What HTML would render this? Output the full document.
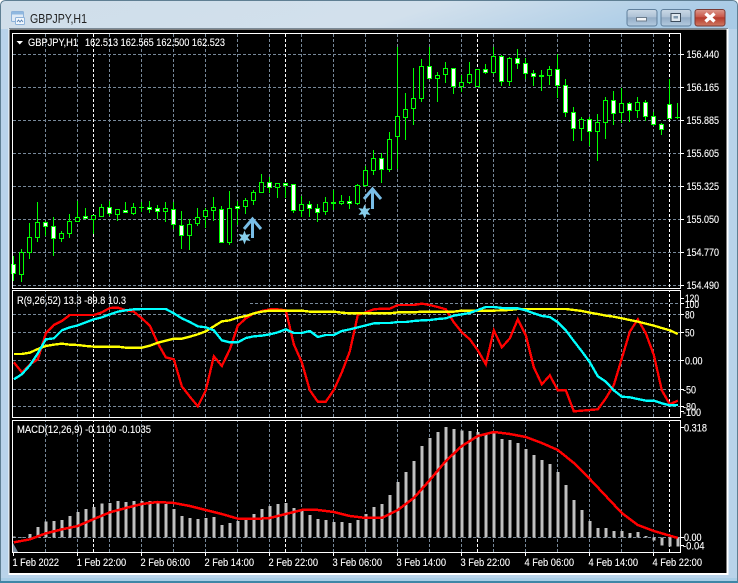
<!DOCTYPE html>
<html><head><meta charset="utf-8"><style>
html,body{margin:0;padding:0;background:#fff;width:738px;height:583px;overflow:hidden}
svg{display:block}
text{font-family:"Liberation Sans",sans-serif;font-size:10.8px;fill:#fff;stroke:#fff;stroke-width:.12px}
</style></head><body>
<svg width="738" height="583" viewBox="0 0 738 583" xmlns="http://www.w3.org/2000/svg">
<defs>
<linearGradient id="t" x1="0" y1="0" x2="1" y2="0.12"><stop offset="0" stop-color="#cfdeea"/><stop offset=".6" stop-color="#d2e0ec"/><stop offset="1" stop-color="#a9cbe6"/></linearGradient>
<linearGradient id="b" x1="0" y1="0" x2="0" y2="1"><stop offset="0" stop-color="#cbd9e6"/><stop offset=".45" stop-color="#aec2d6"/><stop offset=".5" stop-color="#94adc6"/><stop offset="1" stop-color="#b4cbe0"/></linearGradient>
<linearGradient id="r" x1="0" y1="0" x2="0" y2="1"><stop offset="0" stop-color="#dc9a8e"/><stop offset=".45" stop-color="#c9584a"/><stop offset=".5" stop-color="#b53a2c"/><stop offset="1" stop-color="#d07a62"/></linearGradient>
</defs>
<path d="M.5 582.5V6Q.5.5 6 .5H732Q737.5.5 737.5 6V582.5Z" fill="#b9d3ea" stroke="#5f7f93"/>
<path d="M1 29V6Q1 1 6 1H732Q737 1 737 6V29Z" fill="url(#t)"/>
<rect x="1" y="578" width="736" height="3" fill="#a9cde6"/>
<rect x="0" y="581" width="738" height="2" fill="#3f86a6"/>
<rect x="8.5" y="28.5" width="720" height="546.5" fill="#fff"/>
<rect x="9.5" y="29.5" width="717" height="543.5" fill="#000"/>
<rect x="9" y="28" width="719" height="1" fill="#7b8a96"/>
<g>
<rect x="11.5" y="11.5" width="12" height="10" rx="1" fill="#dfeaf6" stroke="#8db2da"/>
<rect x="12" y="12" width="11" height="2.5" fill="#8fb8e0"/>
<rect x="15.5" y="17.5" width="9" height="7" rx="1" fill="#f2f7fc" stroke="#8db2da"/>
<path d="M17 22l1.5-2 1.5 2 1.5-2 1.5 2" fill="none" stroke="#5b86b8" stroke-width=".9"/>
</g>
<text x="30" y="23" textLength="57" lengthAdjust="spacingAndGlyphs" style="font-size:12.5px;fill:#222;stroke:none">GBPJPY,H1</text>
<rect x="627" y="9.5" width="30" height="16.5" rx="2.5" fill="url(#b)" stroke="#5f7f9c"/>
<rect x="661" y="9.5" width="30" height="16.5" rx="2.5" fill="url(#b)" stroke="#5f7f9c"/>
<rect x="695" y="9.5" width="30" height="16.5" rx="2.5" fill="url(#r)" stroke="#7a3a34"/>
<rect x="636.5" y="17.5" width="10" height="3.5" fill="#f4f6f8" stroke="#6c7c8c"/>
<rect x="671" y="13.5" width="9.5" height="8" fill="#dfe8f0" stroke="#3c4c5c"/><rect x="673.5" y="16" width="4.5" height="2.5" fill="#7f97ad"/>
<path d="M705.5 13.5L714.5 21.5M714.5 13.5L705.5 21.5" stroke="#fff" stroke-width="3.4"/>

<!-- horizontal grid -->
<path d="M13 54.5H680M13 87.5H680M13 120.5H680M13 153.5H680M13 186.5H680M13 219.5H680M13 252.5H680M13 285.5H680M250 303.5H680M13 314.5H680M13 332.5H680M13 360.5H680M13 389.5H680M13 406.5H680M13 537.5H680" stroke="#778899" stroke-dasharray="3 2" fill="none"/>
<!-- vertical grid -->
<path d="M45.5 34V552M77.5 34V552M109.5 34V552M141.5 34V552M173.5 34V552M205.5 34V552M237.5 34V552M269.5 34V552M301.5 34V552M333.5 34V552M365.5 34V552M397.5 34V552M429.5 34V552M461.5 34V552M493.5 34V552M525.5 34V552M557.5 34V552M589.5 34V552M621.5 34V552M653.5 34V552" stroke="#778899" stroke-dasharray="3 2" fill="none"/>
<path d="M93.5 34V552M285.5 34V552M477.5 34V552M669.5 34V552" stroke="#fff" stroke-dasharray="3 2" fill="none"/>

<!-- wicks -->
<path fill="none" stroke="#0f0" d="M13.5 256V281M21.5 249V282M29.5 223V259M37.5 202V242M45.5 221V236M53.5 217V256M61.5 231V242M69.5 214V238M77.5 201V222M85.5 208V219M93.5 215V234M101.5 204V217M109.5 201V216M117.5 209V221M125.5 202V213M133.5 203V215M141.5 202V212M149.5 201V213M157.5 205V219M165.5 202V222M173.5 202V229M181.5 211V249M189.5 219V250M197.5 208V226M205.5 208V228M213.5 197V221M221.5 206V243M229.5 191V245M237.5 201V225M245.5 198V214M253.5 190V205M261.5 174V193M269.5 177V193M277.5 183V198M285.5 183V198M293.5 184V213M301.5 196V217M309.5 201V217M317.5 204V222M325.5 197V215M333.5 190V210M341.5 195V205M349.5 196V209M357.5 184V205M365.5 166V187M373.5 150V175M381.5 153V183M389.5 132V172M397.5 47V169M405.5 93V140M413.5 68V125M421.5 59V102M429.5 47V79M437.5 72V102M445.5 62V83M453.5 68V94M461.5 75V92M469.5 62V84M477.5 69V87M485.5 64V74M493.5 47V74M501.5 55V86M509.5 57V86M517.5 49V69M525.5 58V79M533.5 70V86M541.5 70V91M549.5 66V85M557.5 54V98M565.5 79V117M573.5 107V141M581.5 117V141M589.5 117V146M597.5 114V161M605.5 97V139M613.5 91V125M621.5 88V123M629.5 102V122M637.5 97V118M645.5 100V121M653.5 112V126M661.5 123V135M669.5 79V119M677.5 103V119"/>
<!-- filled bodies -->
<path fill="#fff" stroke="#0f0" d="M11.5 264.5h4v9h-4zM43.5 222.5h4v4h-4zM51.5 226.5h4v12h-4zM83.5 216.5h4v2h-4zM107.5 207.5h4v6h-4zM123.5 210.5h4v2h-4zM147.5 207.5h4v2h-4zM155.5 208.5h4v3h-4zM171.5 209.5h4v15h-4zM179.5 225.5h4v10h-4zM219.5 209.5h4v33h-4zM235.5 206.5h4v2h-4zM267.5 182.5h4v5h-4zM283.5 183.5h4v2h-4zM291.5 184.5h4v26h-4zM307.5 204.5h4v4h-4zM315.5 208.5h4v4h-4zM347.5 201.5h4v2h-4zM379.5 158.5h4v11h-4zM427.5 66.5h4v12h-4zM451.5 68.5h4v18h-4zM483.5 69.5h4v3h-4zM499.5 56.5h4v25h-4zM515.5 58.5h4v5h-4zM523.5 63.5h4v10h-4zM531.5 73.5h4v3h-4zM555.5 69.5h4v16h-4zM563.5 85.5h4v27h-4zM571.5 112.5h4v16h-4zM587.5 119.5h4v12h-4zM611.5 100.5h4v13h-4zM627.5 103.5h4v7h-4zM643.5 102.5h4v14h-4zM651.5 116.5h4v8h-4zM659.5 124.5h4v5h-4zM667.5 104.5h4v14h-4z"/>
<!-- hollow bodies -->
<path fill="#000" stroke="#0f0" d="M19.5 252.5h4v22h-4zM27.5 237.5h4v15h-4zM35.5 222.5h4v15h-4zM59.5 233.5h4v5h-4zM67.5 221.5h4v12h-4zM75.5 217.5h4v4h-4zM91.5 215.5h4v4h-4zM99.5 207.5h4v9h-4zM115.5 209.5h4v5h-4zM131.5 207.5h4v6h-4zM163.5 208.5h4v3h-4zM187.5 224.5h4v11h-4zM195.5 217.5h4v6h-4zM203.5 210.5h4v6h-4zM211.5 207.5h4v3h-4zM227.5 208.5h4v34h-4zM243.5 200.5h4v6h-4zM251.5 192.5h4v8h-4zM259.5 182.5h4v10h-4zM275.5 183.5h4v4h-4zM299.5 204.5h4v6h-4zM323.5 202.5h4v9h-4zM339.5 201.5h4v2h-4zM355.5 185.5h4v18h-4zM363.5 170.5h4v15h-4zM371.5 158.5h4v12h-4zM387.5 139.5h4v30h-4zM395.5 116.5h4v20h-4zM403.5 109.5h4v8h-4zM411.5 98.5h4v10h-4zM419.5 66.5h4v32h-4zM435.5 75.5h4v3h-4zM443.5 68.5h4v6h-4zM459.5 82.5h4v4h-4zM467.5 74.5h4v8h-4zM475.5 69.5h4v17h-4zM491.5 56.5h4v16h-4zM507.5 58.5h4v23h-4zM547.5 69.5h4v6h-4zM579.5 119.5h4v9h-4zM595.5 122.5h4v9h-4zM603.5 100.5h4v22h-4zM619.5 103.5h4v9h-4zM635.5 102.5h4v8h-4z"/>
<!-- dojis -->
<path fill="none" stroke="#0f0" d="M139 207.5h5M331 202.5h5M331 203.5h5M539 75.5h5M539 76.5h5M675 117.5h5"/>

<!-- signal arrows and stars -->
<g fill="none" stroke="#79bde6" stroke-width="3">
<path d="M244 229L252.5 219L261 229M252.5 219V238"/>
<path d="M364 199L372.5 189L381 199M372.5 189V209"/>
</g>
<polygon transform="translate(244.5 237.5)" fill="#87ceeb" points="0,-7 1.6,-2.77 6.06,-3.5 3.2,0 6.06,3.5 1.6,2.77 0,7 -1.6,2.77 -6.06,3.5 -3.2,0 -6.06,-3.5 -1.6,-2.77"/>
<polygon transform="translate(364.5 211.5)" fill="#87ceeb" points="0,-7 1.6,-2.77 6.06,-3.5 3.2,0 6.06,3.5 1.6,2.77 0,7 -1.6,2.77 -6.06,3.5 -3.2,0 -6.06,-3.5 -1.6,-2.77"/>

<!-- MACD histogram -->
<g transform="translate(.5 420) scale(.33333)" shape-rendering="crispEdges">
<path fill="none" stroke="#c0c0c0" stroke-width="9" d="M40 352V350M64 352V351M88 352V342M112 352V321M136 352V305M160 352V303M184 352V300M208 352V288M232 352V276M256 352V267M280 352V261M304 352V250M328 352V249M352 352V243M376 352V246M400 352V243M424 352V243M448 352V243M472 352V249M496 352V252M520 352V267M544 352V288M568 352V294M592 352V297M616 352V294M640 352V291M664 352V315M688 352V309M712 352V303M736 352V300M760 352V282M784 352V267M808 352V258M832 352V252M856 352V249M880 352V264M904 352V270M928 352V285M952 352V297M976 352V300M1000 352V306M1024 352V306M1048 352V309M1072 352V300M1096 352V282M1120 352V261M1144 352V252M1168 352V225M1192 352V186M1216 352V156M1240 352V123M1264 352V78M1288 352V54M1312 352V36M1336 352V21M1360 352V27M1384 352V32M1408 352V33M1432 352V36M1456 352V42M1480 352V36M1504 352V57M1528 352V60M1552 352V69M1576 352V87M1600 352V105M1624 352V120M1648 352V132M1672 352V156M1696 352V195M1720 352V240M1744 352V270M1768 352V303M1792 352V324M1816 352V324M1840 352V333M1864 352V333M1888 352V339M1912 352V336M1936 352V348M1960 352V362M1984 352V377M2008 352V380M2032 352V380"/>
<polyline fill="none" stroke="#f00" stroke-width="7.5" points="40,367 88,358 136,340 184,328 232,318 280,297 328,277 376,264 424,252 472,246 520,249 568,258 616,270 664,282 712,296 760,297 808,294 856,282 904,270 952,270 1000,276 1048,288 1096,294 1144,294 1192,270 1240,234 1288,180 1336,123 1384,78 1432,48 1480,36 1528,42 1576,51 1624,69 1672,90 1720,129 1768,177 1816,228 1864,279 1912,315 1960,333 2008,347 2032,354"/>
</g>
<polygon points="13,543 18,552 13,552" fill="#778899"/>

<!-- RSI-type lines -->
<g transform="translate(.5 285) scale(.33333)" shape-rendering="crispEdges" fill="none" stroke-width="7">
<polyline stroke="#f00" points="40,232 64,262 88,238 112,223 136,145 160,120 184,108 208,90 232,90 256,90 280,90 304,82 328,69 352,68 376,76 400,80 424,100 448,122 472,175 496,217 520,223 544,304 568,335 592,364 616,316 640,214 664,243 688,193 712,122 736,100 760,85 784,78 808,73 832,73 856,76 880,178 904,232 928,316 952,350 976,350 1000,315 1024,262 1048,199 1072,90 1096,82 1120,73 1144,71 1168,71 1192,60 1216,60 1240,60 1264,56 1288,60 1312,66 1336,73 1360,112 1384,142 1408,163 1432,196 1456,238 1480,136 1504,187 1528,160 1552,103 1576,151 1600,247 1624,298 1648,271 1672,316 1696,316 1720,379 1744,377 1768,375 1792,373 1816,340 1840,300 1864,220 1888,140 1912,103 1936,145 1960,210 1984,316 2008,358 2032,347"/>
<polyline stroke="#ff0" points="40,207 64,207 88,203 112,192 136,183 160,179 184,176 208,179 232,180 256,183 280,185 304,185 328,185 352,185 376,188 400,188 424,188 448,182 472,173 496,167 520,161 544,161 568,155 592,148 616,139 640,124 664,109 688,106 712,98 736,93 760,85 784,80 808,77 832,77 856,77 880,77 904,77 928,80 952,80 976,80 1000,80 1024,83 1048,85 1072,85 1096,85 1120,85 1144,85 1168,85 1192,82 1216,82 1240,82 1264,80 1288,80 1312,80 1336,80 1360,80 1384,77 1408,77 1432,77 1456,77 1480,77 1504,76 1528,75 1552,72 1576,72 1600,72 1624,72 1648,72 1672,72 1696,72 1720,75 1744,78 1768,83 1792,87 1816,92 1840,95 1864,100 1888,105 1912,110 1936,116 1960,122 1984,129 2008,136 2032,147"/>
<polyline stroke="#0ff" points="40,283 64,268 88,241 112,205 136,163 160,160 184,136 208,127 232,121 256,112 280,103 304,97 328,88 352,80 376,76 400,73 424,72 448,72 472,72 496,72 520,85 544,100 568,111 592,124 616,127 640,136 664,166 688,172 712,172 736,159 760,154 784,152 808,148 832,142 856,133 880,144 904,144 928,138 952,156 976,150 1000,150 1024,138 1048,133 1072,127 1096,121 1120,115 1144,114 1168,114 1192,111 1216,111 1240,108 1264,106 1288,105 1312,102 1336,100 1360,92 1384,88 1408,84 1432,75 1456,66 1480,66 1504,69 1528,70 1552,70 1576,76 1600,85 1624,93 1648,96 1672,112 1696,136 1720,168 1744,199 1768,232 1792,274 1816,290 1840,316 1864,335 1888,337 1912,342 1936,347 1960,347 1984,355 2008,361 2032,360"/>
</g>

<!-- panel gaps and frames -->
<path d="M13 289.5H680M13 418.5H680M13 419.5H680" stroke="#000" fill="none"/>
<g fill="none" stroke="#fff">
<rect x="12.5" y="33.5" width="668" height="255"/>
<rect x="12.5" y="290.5" width="668" height="127"/>
<rect x="12.5" y="420.5" width="668" height="132"/>
<path d="M681 54.5h3M681 87.5h3M681 120.5h3M681 153.5h3M681 186.5h3M681 219.5h3M681 252.5h3M681 285.5h3M681 298.5h3M681 303.5h3M681 314.5h3M681 332.5h3M681 360.5h3M681 389.5h3M681 406.5h3M681 411.5h3M681 427.5h3M681 537.5h3M681 545.5h3M13.5 553v3M77.5 553v3M141.5 553v3M205.5 553v3M269.5 553v3M333.5 553v3M397.5 553v3M461.5 553v3M525.5 553v3M589.5 553v3M653.5 553v3"/>
</g>

<!-- labels -->
<polygon points="16.5,41 23,41 19.75,44.5" fill="#fff"/>
<text x="28" y="46" textLength="50" lengthAdjust="spacingAndGlyphs">GBPJPY,H1</text>
<text x="85" y="46" textLength="140" lengthAdjust="spacingAndGlyphs">162.513 162.565 162.500 162.523</text>
<text x="17" y="304" textLength="109" lengthAdjust="spacingAndGlyphs">R(9,26,52) 13.3 -89.8 10.3</text>
<text x="17" y="433" textLength="134" lengthAdjust="spacingAndGlyphs">MACD(12,26,9) -0.1100 -0.1035</text>

<text x="686.5" y="58" textLength="32.5" lengthAdjust="spacingAndGlyphs">156.440</text>
<text x="686.5" y="91" textLength="32.5" lengthAdjust="spacingAndGlyphs">156.165</text>
<text x="686.5" y="124" textLength="32.5" lengthAdjust="spacingAndGlyphs">155.885</text>
<text x="686.5" y="157" textLength="32.5" lengthAdjust="spacingAndGlyphs">155.605</text>
<text x="686.5" y="190" textLength="32.5" lengthAdjust="spacingAndGlyphs">155.325</text>
<text x="686.5" y="223" textLength="32.5" lengthAdjust="spacingAndGlyphs">155.050</text>
<text x="686.5" y="256" textLength="32.5" lengthAdjust="spacingAndGlyphs">154.770</text>
<text x="686.5" y="289" textLength="32.5" lengthAdjust="spacingAndGlyphs">154.490</text>

<text x="685" y="302" textLength="14" lengthAdjust="spacingAndGlyphs">120</text>
<text x="685" y="308" textLength="14" lengthAdjust="spacingAndGlyphs">100</text>
<text x="685" y="318.5" textLength="9.5" lengthAdjust="spacingAndGlyphs">80</text>
<text x="685" y="336.5" textLength="9.5" lengthAdjust="spacingAndGlyphs">50</text>
<text x="685" y="364.5" textLength="17.5" lengthAdjust="spacingAndGlyphs">0.00</text>
<text x="683" y="393.5" textLength="13" lengthAdjust="spacingAndGlyphs">-50</text>
<text x="683" y="410.5" textLength="13" lengthAdjust="spacingAndGlyphs">-80</text>
<text x="683" y="416" textLength="18" lengthAdjust="spacingAndGlyphs">-100</text>

<text x="684" y="431.5" textLength="23" lengthAdjust="spacingAndGlyphs">0.318</text>
<text x="684" y="541" textLength="17.5" lengthAdjust="spacingAndGlyphs">0.00</text>
<text x="683" y="549.5" textLength="21.5" lengthAdjust="spacingAndGlyphs">-0.04</text>

<text x="12.5" y="566" textLength="46.5" lengthAdjust="spacingAndGlyphs">1 Feb 2022</text>
<text x="76.7" y="566" textLength="49.5" lengthAdjust="spacingAndGlyphs">1 Feb 22:00</text>
<text x="140.5" y="566" textLength="49.5" lengthAdjust="spacingAndGlyphs">2 Feb 06:00</text>
<text x="204.5" y="566" textLength="49.5" lengthAdjust="spacingAndGlyphs">2 Feb 14:00</text>
<text x="268.5" y="566" textLength="49.5" lengthAdjust="spacingAndGlyphs">2 Feb 22:00</text>
<text x="332.5" y="566" textLength="49.5" lengthAdjust="spacingAndGlyphs">3 Feb 06:00</text>
<text x="396.5" y="566" textLength="49.5" lengthAdjust="spacingAndGlyphs">3 Feb 14:00</text>
<text x="460.5" y="566" textLength="49.5" lengthAdjust="spacingAndGlyphs">3 Feb 22:00</text>
<text x="524.5" y="566" textLength="49.5" lengthAdjust="spacingAndGlyphs">4 Feb 06:00</text>
<text x="588.5" y="566" textLength="49.5" lengthAdjust="spacingAndGlyphs">4 Feb 14:00</text>
<text x="652.5" y="566" textLength="49.5" lengthAdjust="spacingAndGlyphs">4 Feb 22:00</text>
</svg>
</body></html>
